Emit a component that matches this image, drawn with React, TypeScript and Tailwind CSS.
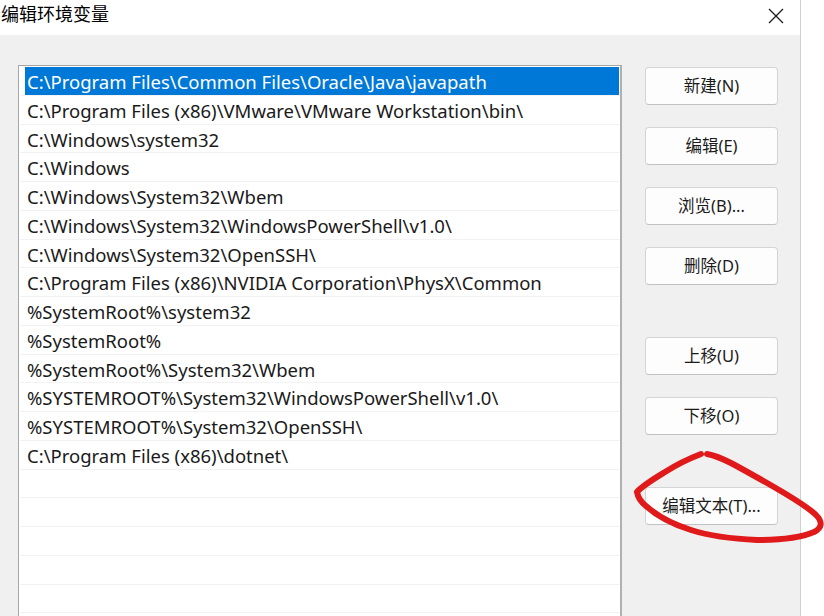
import React from 'react'

const paths = [
  'C:\\Program Files\\Common Files\\Oracle\\Java\\javapath',
  'C:\\Program Files (x86)\\VMware\\VMware Workstation\\bin\\',
  'C:\\Windows\\system32',
  'C:\\Windows',
  'C:\\Windows\\System32\\Wbem',
  'C:\\Windows\\System32\\WindowsPowerShell\\v1.0\\',
  'C:\\Windows\\System32\\OpenSSH\\',
  'C:\\Program Files (x86)\\NVIDIA Corporation\\PhysX\\Common',
  '%SystemRoot%\\system32',
  '%SystemRoot%',
  '%SystemRoot%\\System32\\Wbem',
  '%SYSTEMROOT%\\System32\\WindowsPowerShell\\v1.0\\',
  '%SYSTEMROOT%\\System32\\OpenSSH\\',
  'C:\\Program Files (x86)\\dotnet\\',
  '',
  '',
  '',
  '',
  '',
  '',
]

function DialogButton({ label, className = '' }: { label: string; className?: string }) {
  return (
    <button
      className={`w-[133px] h-[38px] rounded-[4px] border border-[#d4d4d4] border-b-[#c2c2c2] bg-[#fdfdfd] text-[16.5px] text-[#1b1b1b] flex items-center justify-center ${className}`}
    >
      {label}
    </button>
  )
}

export default function App() {
  return (
    <div
      className="relative w-[824px] h-[616px] flex overflow-hidden bg-white"
      style={{ fontFamily: '"Noto Sans", "Noto Sans CJK SC", sans-serif' }}
    >
      <div className="w-[801px] flex flex-col border-r border-[#cfcfcf]">
        {/* 标题栏 */}
        <div className="h-[35px] shrink-0 bg-white flex items-center justify-between pl-[1px] pr-[16px]">
          <span className="text-[18px] text-black leading-none -mt-[8px]">编辑环境变量</span>
          <svg width="16" height="16" viewBox="0 0 16 16" className="-mt-[4px]">
            <path d="M1 1L15 15M15 1L1 15" stroke="#1a1a1a" strokeWidth="1.3" fill="none" />
          </svg>
        </div>

        {/* 内容 */}
        <div className="flex-1 bg-[#f0f0f0] flex pt-[30px] pl-[18px]">
          <div className="w-[604px] h-[560px] shrink-0 bg-white border border-[#a6a6a6] border-r-2 border-r-[#b0b0b0] pt-[1px] pl-[1px] overflow-hidden">
            {paths.map((p, i) => (
              <div key={i} className="h-[28.75px] border-b border-[#f3f3f3] flex">
                {i === 0 ? (
                  <div className="ml-[5px] mr-[1px] flex-1 bg-[#0078d7] text-white flex items-center pl-[2px] pt-[2px] text-[18.5px] whitespace-nowrap">
                    {p}
                  </div>
                ) : (
                  <div className="ml-[5px] flex-1 text-[#1a1a1a] flex items-center pl-[2px] pt-[2px] text-[18.5px] whitespace-nowrap">
                    {p}
                  </div>
                )}
              </div>
            ))}
          </div>

          <div className="ml-[23px] pt-[2px] flex flex-col">
            <DialogButton label="新建(N)" />
            <DialogButton label="编辑(E)" className="mt-[22px]" />
            <DialogButton label="浏览(B)..." className="mt-[22px]" />
            <DialogButton label="删除(D)" className="mt-[22px]" />
            <DialogButton label="上移(U)" className="mt-[52px]" />
            <DialogButton label="下移(O)" className="mt-[22px]" />
            <DialogButton label="编辑文本(T)..." className="mt-[52px]" />
          </div>
        </div>
      </div>
      <div className="flex-1 bg-white" />

      {/* 红色圈注 */}
      <svg className="absolute left-0 top-0 pointer-events-none" width="824" height="616" viewBox="0 0 824 616">
        <path
          d="M701 454 C688 459 676 465 665 472 C652 480 642 486 637 492 C638 498 641 502 646 506 C656 515 672 524 691 530 C710 536 735 539 757 540 C778 540 800 538 814 532 C822 528 823 522 816 515 C808 507 793 498 774 487 C760 479 746 471 731 463 C721 458 713 455 707 454"
          stroke="#e01a1a"
          strokeWidth="6"
          strokeLinecap="round"
          fill="none"
        />
      </svg>
    </div>
  )
}
